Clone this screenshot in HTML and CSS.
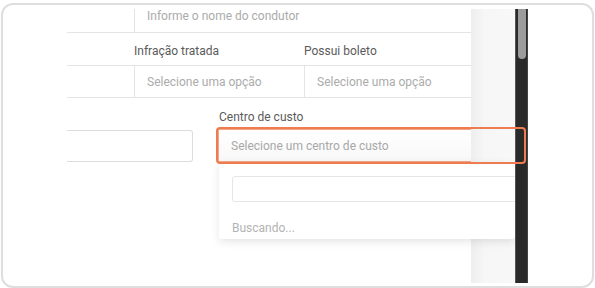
FILE: index.html
```html
<!DOCTYPE html>
<html lang="pt-BR">
<head>
    <meta charset="UTF-8">
    <meta name="viewport" content="width=device-width, initial-scale=1.0">
    <title>Centro de custo</title>
    <link rel="stylesheet" href="styles.css">
</head>
<body>
    <div class="frame">
        <div class="screen">
            <!-- Form area (cropped) -->
            <div class="form">
                <div class="row row-top">
                    <div class="cell cell-first"></div>
                    <div class="cell cell-text">Informe o nome do condutor</div>
                </div>

                <div class="row row-labels">
                    <div class="cell cell-first"></div>
                    <div class="cell label">Infração tratada</div>
                    <div class="cell label">Possui boleto</div>
                </div>

                <div class="row row-selects">
                    <div class="cell cell-first"></div>
                    <div class="cell cell-text">Selecione uma opção</div>
                    <div class="cell cell-text">Selecione uma opção</div>
                </div>

                <div class="fields">
                    <div class="field">
                        <div class="input input-plain"></div>
                    </div>
                    <div class="field cost-field">
                        <span class="field-label">Centro de custo</span>
                        <div class="input input-focus">Selecione um centro de custo</div>
                        <div class="highlight"></div>

                        <div class="dropdown">
                            <div class="search"></div>
                            <p class="loading">Buscando...</p>
                        </div>
                    </div>
                </div>
            </div>

            <div class="side"></div>

            <div class="scrollbar">
                <div class="thumb"></div>
            </div>
        </div>
    </div>
</body>
</html>
```

FILE: styles.css
```css
/* Base */
* {
    margin: 0;
    padding: 0;
    box-sizing: border-box;
}

body {
    background: #fff;
    font-family: Roboto, 'Liberation Sans', sans-serif;
    font-size: 12px;
    line-height: 14px;
}

/* Outer frame */
.frame {
    width: 593px;
    height: 285px;
    margin: 3px 0 0 1px;
    border: 2px solid #dedede;
    border-radius: 12px;
    padding-top: 4px;
    background: #fff;
}

.screen {
    display: flex;
    height: 274px;
}

/* Form */
.form {
    width: 404px;
    margin-left: 64px;
}

.row {
    display: grid;
    grid-template-columns: 67px 170px 1fr;
    border-bottom: 1px solid #e4e4e4;
}

.row-top {
    grid-template-columns: 67px 1fr;
    height: 24px;
}

.row-labels {
    height: 33px;
}

.row-selects {
    height: 32px;
}

.cell {
    display: flex;
    align-items: center;
}

.row-top .cell {
    align-items: flex-start;
}

.cell + .cell {
    border-left: 1px solid #e4e4e4;
}

.row-labels .cell + .cell {
    border-left: none;
    padding-top: 4px;
}

.cell-text {
    padding-left: 12px;
    color: #ababab;
}

.label {
    color: #5a5a5a;
}

.fields {
    display: grid;
    grid-template-columns: 126px 1fr;
    column-gap: 25px;
    align-items: end;
    padding-top: 12px;
}

.field {
    display: flex;
    flex-direction: column;
}

.cost-field {
    position: relative;
}

.field-label {
    color: #5a5a5a;
    margin: 0 0 5px 1px;
}

.input {
    height: 33px;
    display: flex;
    align-items: center;
    color: #a8a8a8;
}

.input-plain {
    border: 1px solid #dcdcdc;
    border-left: none;
    border-radius: 0 3px 3px 0;
    height: 32px;
}

.input-focus {
    border: 1px solid #f3a584;
    border-right: none;
    padding-left: 12px;
    background: linear-gradient(#fff, #f8f8f8);
}

/* Tutorial highlight */
.highlight {
    position: absolute;
    left: -2px;
    bottom: -2px;
    width: 310px;
    height: 37px;
    border: 2px solid #ef7c51;
    border-radius: 4px;
    z-index: 3;
}

/* Dropdown */
.dropdown {
    position: absolute;
    top: 100%;
    left: 1px;
    width: 296px;
    height: 77px;
    padding: 14px 0 0 13px;
    background: #fff;
    box-shadow: 0 3px 8px rgba(0, 0, 0, 0.1);
    border-radius: 0 0 3px 3px;
    overflow: hidden;
    z-index: 2;
}

.search {
    width: 300px;
    height: 26px;
    border: 1px solid #e6e6e6;
    border-radius: 3px;
}

.loading {
    margin-top: 19px;
    color: #b3b3b3;
}

/* Right side */
.side {
    width: 44px;
    background: linear-gradient(to right, #eeeeee, #f6f6f6 30%, #f8f8f8);
}

.scrollbar {
    width: 13px;
    background: #2a2a2a;
    border-left: 1px solid #555;
    border-right: 1px solid #444;
    padding-left: 2px;
}

.thumb {
    width: 8px;
    height: 50px;
    background: #9c9c9c;
    border-radius: 0 0 4px 4px;
}
```
